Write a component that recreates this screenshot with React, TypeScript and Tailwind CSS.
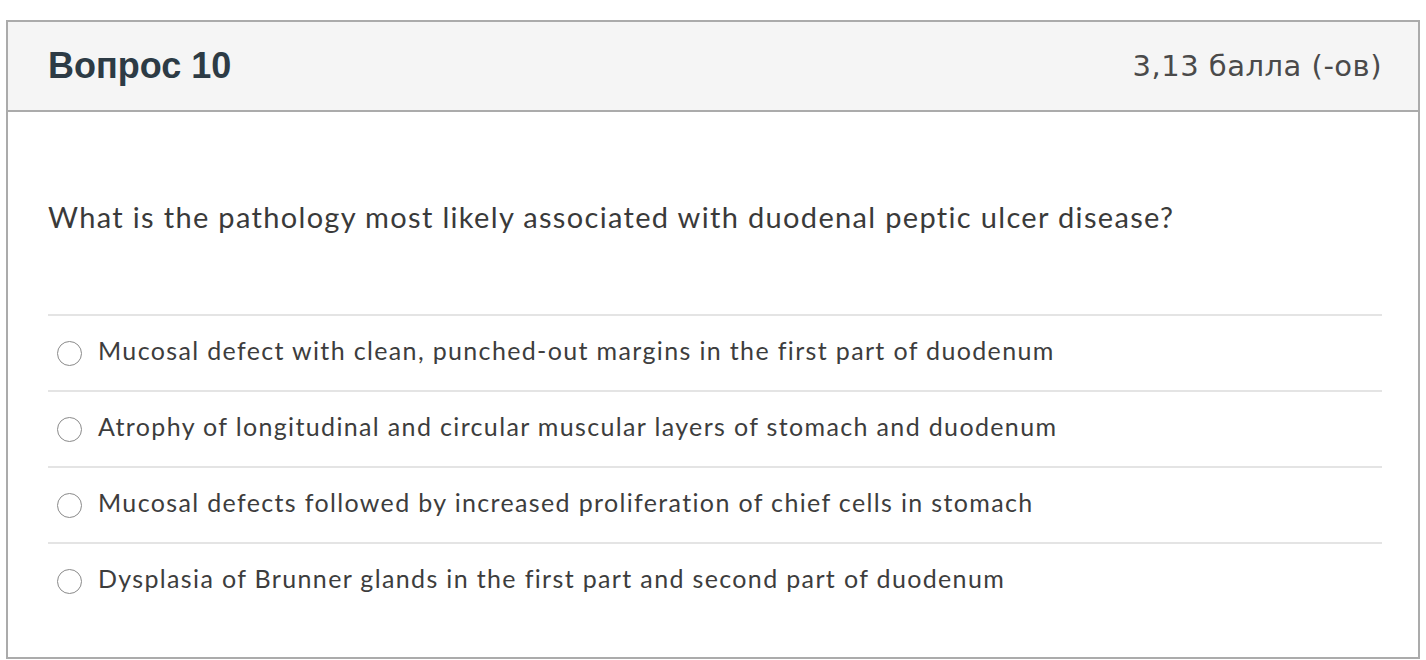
import React from "react";

const options = [
  "Mucosal defect with clean, punched-out margins in the first part of duodenum",
  "Atrophy of longitudinal and circular muscular layers of stomach and duodenum",
  "Mucosal defects followed by increased proliferation of chief cells in stomach",
  "Dysplasia of Brunner glands in the first part and second part of duodenum",
];

export default function App() {
  return (
    <div
      className="w-full h-[660px] bg-white pt-[20px] px-[6px]"
      style={{ fontFamily: "Lato, 'Noto Sans', 'Noto Sans CJK SC', sans-serif" }}
    >
      <div className="border-2 border-[#ababab] bg-white h-[639px]">
        <div className="h-[90px] bg-[#f5f5f5] border-b-2 border-[#ababab] flex items-center justify-between pl-[40px] pr-[36px]">
          <h2 className="font-['Liberation_Sans',Arial,sans-serif] text-[36px] font-bold text-[#2d3b45] leading-none">
            Вопрос 10
          </h2>
          <div className="font-['DejaVu_Sans',sans-serif] text-[29px] tracking-[0.5px] text-[#4a4a4a] leading-none">
            3,13 балла (-ов)
          </div>
        </div>
        <div className="px-[40px] pt-[84px]">
          <div className="text-[29px] tracking-[1.33px] leading-[42px] text-[#3a3a3a]">
            What is the pathology most likely associated with duodenal peptic ulcer disease?
          </div>
          <div className="mt-[76px] mr-[-4px]">
            {options.map((o) => (
              <label
                key={o}
                className="flex items-start border-t-2 border-[#e4e4e4] h-[76px] pt-[19px] cursor-pointer"
              >
                <span className="ml-[9px] mt-[6px] w-[25px] h-[25px] rounded-full border border-[#8a8a8a] bg-white shrink-0" />
                <span className="ml-[16px] text-[25px] tracking-[1.35px] leading-[30px] text-[#3d3d3d]">{o}</span>
              </label>
            ))}
          </div>
        </div>
      </div>
    </div>
  );
}
